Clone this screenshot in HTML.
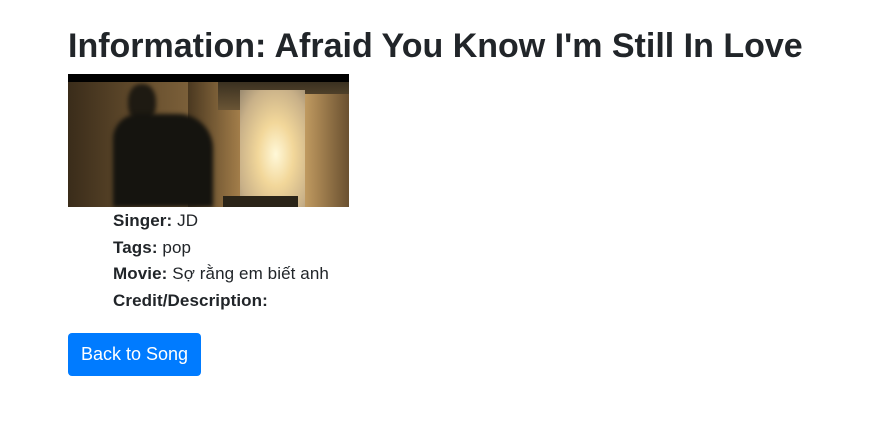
<!DOCTYPE html>
<html><head><meta charset="utf-8"><style>
body{margin:0;background:#fff;font-family:"Liberation Sans",sans-serif;color:#212529;}
h1{position:absolute;left:68px;top:22px;margin:0;font-size:34px;font-weight:bold;line-height:48px;white-space:nowrap;letter-spacing:0}
.img{position:absolute;left:68px;top:74px;width:281px;height:133px;overflow:hidden;background:linear-gradient(90deg,#3a2c1a 0%,#6b5230 30%,#8a6c42 55%,#9a7a4a 80%,#6a5030 100%);}
.bar{position:absolute;left:0;top:0;width:281px;height:8px;background:#000}
ul{position:absolute;left:113px;top:208px;margin:0;padding:0;list-style:none;font-size:17px;line-height:26.7px;letter-spacing:0.1px}
.btn{position:absolute;left:68px;top:333px;width:133px;height:43px;background:#007bff;color:#fff;border-radius:4px;font-size:18px;line-height:43px;text-align:center}
</style></head><body>
<h1>Information: Afraid You Know I'm Still In Love</h1>
<div class="img">
<div style="position:absolute;left:120px;top:8px;width:60px;height:125px;background:linear-gradient(90deg,#4a3820,#b08850)"></div>
<div style="position:absolute;left:150px;top:8px;width:131px;height:28px;background:linear-gradient(#3a3020,#6a5535)"></div>
<div style="position:absolute;left:172px;top:16px;width:65px;height:117px;background:radial-gradient(ellipse at 55% 55%,#fff8d8 0%,#f2d79a 35%,#c8b088 75%,#9a8a70 100%)"></div>
<div style="position:absolute;left:237px;top:20px;width:44px;height:113px;background:linear-gradient(90deg,#c09a60,#6a5030)"></div>
<div style="position:absolute;left:60px;top:10px;width:28px;height:38px;border-radius:45%;background:#1e1a12;filter:blur(2px)"></div>
<div style="position:absolute;left:45px;top:40px;width:100px;height:93px;border-radius:25px 35px 0 0;background:#15140f;filter:blur(2px)"></div>
<div style="position:absolute;left:155px;top:122px;width:75px;height:11px;background:#2a2418"></div>
<div class="bar"></div>
</div>
<ul>
<li><b>Singer:</b> JD</li>
<li><b>Tags:</b> pop</li>
<li><b>Movie:</b> Sợ rằng em biết anh</li>
<li><b>Credit/Description:</b></li>
</ul>
<div class="btn">Back to Song</div>
</body></html>
